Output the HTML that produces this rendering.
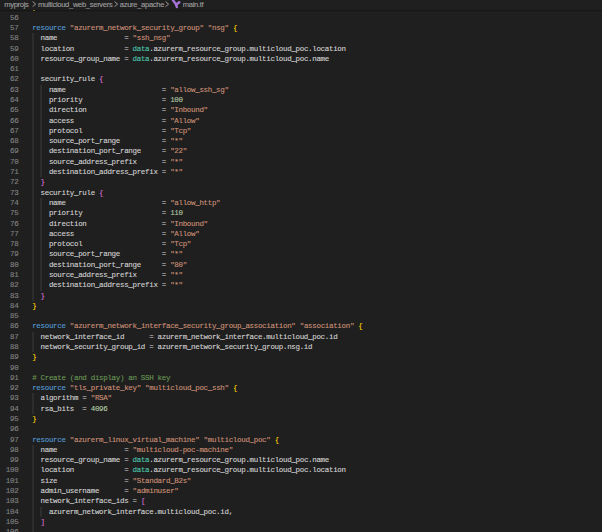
<!DOCTYPE html><html><head><meta charset="utf-8"><style>
*{margin:0;padding:0;box-sizing:border-box}
html,body{width:602px;height:532px;overflow:hidden;background:#1f1f1f}
body{position:relative;font-family:"Liberation Mono",monospace;font-size:7.5px;letter-spacing:-0.321px;-webkit-text-stroke:0.1px}
.bc{position:absolute;left:0;top:0;width:602px;height:10px;background:#1f1f1f;font-family:"Liberation Sans",sans-serif;font-size:7.6px;color:#a0a0a0;white-space:pre}
.bs{position:absolute;top:-0.3px}
.sh{position:absolute;left:0;top:10px;width:602px;height:2px;background:linear-gradient(#141414,#1f1f1f)}
.ln{position:absolute;left:0;width:18.4px;text-align:right;color:#858585;white-space:pre;line-height:10.29px;height:10.29px}
.cl{position:absolute;left:32.2px;white-space:pre;color:#d4d4d4;line-height:10.29px;height:10.29px}
.g{position:absolute;width:2px;background:#2d2d2d}
.k{color:#569cd6}.s{color:#ce9178}.n{color:#b5cea8}.c{color:#6a9955}.d{color:#4ec9b0}
.b1{color:#ffd700}.b2{color:#da70d6}.b3{color:#179fff}
</style></head><body>
<div class="bc"><span class="bs" style="left:4.2px">myprojs</span><svg style="position:absolute;left:31.6px;top:1.3px" width="5" height="7" viewBox="0 0 5 7"><path d="M0.6 0.6 L3.6 3.1 L0.6 5.6" fill="none" stroke="#a9a9a9" stroke-width="0.9"/></svg><span class="bs" style="left:38.0px">multicloud_web_servers</span><svg style="position:absolute;left:114.0px;top:1.3px" width="5" height="7" viewBox="0 0 5 7"><path d="M0.6 0.6 L3.6 3.1 L0.6 5.6" fill="none" stroke="#a9a9a9" stroke-width="0.9"/></svg><span class="bs" style="left:119.8px">azure_apache</span><svg style="position:absolute;left:165.0px;top:1.3px" width="5" height="7" viewBox="0 0 5 7"><path d="M0.6 0.6 L3.6 3.1 L0.6 5.6" fill="none" stroke="#a9a9a9" stroke-width="0.9"/></svg><svg style="position:absolute;left:171px;top:0px" width="10" height="9" viewBox="171 0 10 9"><g stroke="#a674d8" stroke-width="2.4" stroke-linecap="round" fill="none"><path d="M173.0 0.3 L175.8 4"/><path d="M176.6 4.3 L179.3 2.2"/><path d="M176 4.3 L176.8 7"/></g></svg><span class="bs" style="left:182.8px">main.tf</span></div>
<div class="sh"></div><div style="position:absolute;left:33px;top:9.8px;width:2px;height:1.3px;background:#7d6a12"></div>
<div class="g" style="left:32.00px;top:33.28px;height:267.54px"></div>
<div class="g" style="left:40.36px;top:84.73px;height:92.61px"></div>
<div class="g" style="left:40.36px;top:197.92px;height:92.61px"></div>
<div class="g" style="left:32.00px;top:331.69px;height:20.58px"></div>
<div class="g" style="left:32.00px;top:393.43px;height:20.58px"></div>
<div class="g" style="left:32.00px;top:444.88px;height:102.90px"></div>
<div class="g" style="left:40.36px;top:506.62px;height:10.29px"></div>
<div class="ln" style="top:12.70px">56</div>
<div class="ln" style="top:22.99px">57</div>
<div class="cl" style="top:22.99px"><span class="k">resource</span> <span class="s">&quot;azurerm_network_security_group&quot;</span> <span class="s">&quot;nsg&quot;</span> <span class="b1">{</span></div>
<div class="ln" style="top:33.28px">58</div>
<div class="cl" style="top:33.28px">  name                = <span class="s">&quot;ssh_nsg&quot;</span></div>
<div class="ln" style="top:43.57px">59</div>
<div class="cl" style="top:43.57px">  location            = <span class="d">data</span>.azurerm_resource_group.multicloud_poc.location</div>
<div class="ln" style="top:53.86px">60</div>
<div class="cl" style="top:53.86px">  resource_group_name = <span class="d">data</span>.azurerm_resource_group.multicloud_poc.name</div>
<div class="ln" style="top:64.15px">61</div>
<div class="ln" style="top:74.44px">62</div>
<div class="cl" style="top:74.44px">  security_rule <span class="b2">{</span></div>
<div class="ln" style="top:84.73px">63</div>
<div class="cl" style="top:84.73px">    name                       = <span class="s">&quot;allow_ssh_sg&quot;</span></div>
<div class="ln" style="top:95.02px">64</div>
<div class="cl" style="top:95.02px">    priority                   = <span class="n">100</span></div>
<div class="ln" style="top:105.31px">65</div>
<div class="cl" style="top:105.31px">    direction                  = <span class="s">&quot;Inbound&quot;</span></div>
<div class="ln" style="top:115.60px">66</div>
<div class="cl" style="top:115.60px">    access                     = <span class="s">&quot;Allow&quot;</span></div>
<div class="ln" style="top:125.89px">67</div>
<div class="cl" style="top:125.89px">    protocol                   = <span class="s">&quot;Tcp&quot;</span></div>
<div class="ln" style="top:136.18px">68</div>
<div class="cl" style="top:136.18px">    source_port_range          = <span class="s">&quot;*&quot;</span></div>
<div class="ln" style="top:146.47px">69</div>
<div class="cl" style="top:146.47px">    destination_port_range     = <span class="s">&quot;22&quot;</span></div>
<div class="ln" style="top:156.76px">70</div>
<div class="cl" style="top:156.76px">    source_address_prefix      = <span class="s">&quot;*&quot;</span></div>
<div class="ln" style="top:167.05px">71</div>
<div class="cl" style="top:167.05px">    destination_address_prefix = <span class="s">&quot;*&quot;</span></div>
<div class="ln" style="top:177.34px">72</div>
<div class="cl" style="top:177.34px">  <span class="b2">}</span></div>
<div class="ln" style="top:187.63px">73</div>
<div class="cl" style="top:187.63px">  security_rule <span class="b2">{</span></div>
<div class="ln" style="top:197.92px">74</div>
<div class="cl" style="top:197.92px">    name                       = <span class="s">&quot;allow_ht<span></span>tp&quot;</span></div>
<div class="ln" style="top:208.21px">75</div>
<div class="cl" style="top:208.21px">    priority                   = <span class="n">110</span></div>
<div class="ln" style="top:218.50px">76</div>
<div class="cl" style="top:218.50px">    direction                  = <span class="s">&quot;Inbound&quot;</span></div>
<div class="ln" style="top:228.79px">77</div>
<div class="cl" style="top:228.79px">    access                     = <span class="s">&quot;Allow&quot;</span></div>
<div class="ln" style="top:239.08px">78</div>
<div class="cl" style="top:239.08px">    protocol                   = <span class="s">&quot;Tcp&quot;</span></div>
<div class="ln" style="top:249.37px">79</div>
<div class="cl" style="top:249.37px">    source_port_range          = <span class="s">&quot;*&quot;</span></div>
<div class="ln" style="top:259.66px">80</div>
<div class="cl" style="top:259.66px">    destination_port_range     = <span class="s">&quot;80&quot;</span></div>
<div class="ln" style="top:269.95px">81</div>
<div class="cl" style="top:269.95px">    source_address_prefix      = <span class="s">&quot;*&quot;</span></div>
<div class="ln" style="top:280.24px">82</div>
<div class="cl" style="top:280.24px">    destination_address_prefix = <span class="s">&quot;*&quot;</span></div>
<div class="ln" style="top:290.53px">83</div>
<div class="cl" style="top:290.53px">  <span class="b2">}</span></div>
<div class="ln" style="top:300.82px">84</div>
<div class="cl" style="top:300.82px"><span class="b1">}</span></div>
<div class="ln" style="top:311.11px">85</div>
<div class="ln" style="top:321.40px">86</div>
<div class="cl" style="top:321.40px"><span class="k">resource</span> <span class="s">&quot;azurerm_network_interface_security_group_association&quot;</span> <span class="s">&quot;association&quot;</span> <span class="b1">{</span></div>
<div class="ln" style="top:331.69px">87</div>
<div class="cl" style="top:331.69px">  network_interface_id      = azurerm_network_interface.multicloud_poc.id</div>
<div class="ln" style="top:341.98px">88</div>
<div class="cl" style="top:341.98px">  network_security_group_id = azurerm_network_security_group.nsg.id</div>
<div class="ln" style="top:352.27px">89</div>
<div class="cl" style="top:352.27px"><span class="b1">}</span></div>
<div class="ln" style="top:362.56px">90</div>
<div class="ln" style="top:372.85px">91</div>
<div class="cl" style="top:372.85px"><span class="c"># Create (and display) an SSH key</span></div>
<div class="ln" style="top:383.14px">92</div>
<div class="cl" style="top:383.14px"><span class="k">resource</span> <span class="s">&quot;tls_private_key&quot;</span> <span class="s">&quot;multicloud_poc_ssh&quot;</span> <span class="b1">{</span></div>
<div class="ln" style="top:393.43px">93</div>
<div class="cl" style="top:393.43px">  algorithm = <span class="s">&quot;RSA&quot;</span></div>
<div class="ln" style="top:403.72px">94</div>
<div class="cl" style="top:403.72px">  rsa_bits  = <span class="n">4096</span></div>
<div class="ln" style="top:414.01px">95</div>
<div class="cl" style="top:414.01px"><span class="b1">}</span></div>
<div class="ln" style="top:424.30px">96</div>
<div class="ln" style="top:434.59px">97</div>
<div class="cl" style="top:434.59px"><span class="k">resource</span> <span class="s">&quot;azurerm_linux_virtual_machine&quot;</span> <span class="s">&quot;multicloud_poc&quot;</span> <span class="b1">{</span></div>
<div class="ln" style="top:444.88px">98</div>
<div class="cl" style="top:444.88px">  name                = <span class="s">&quot;multicloud-poc-machine&quot;</span></div>
<div class="ln" style="top:455.17px">99</div>
<div class="cl" style="top:455.17px">  resource_group_name = <span class="d">data</span>.azurerm_resource_group.multicloud_poc.name</div>
<div class="ln" style="top:465.46px">100</div>
<div class="cl" style="top:465.46px">  location            = <span class="d">data</span>.azurerm_resource_group.multicloud_poc.location</div>
<div class="ln" style="top:475.75px">101</div>
<div class="cl" style="top:475.75px">  size                = <span class="s">&quot;Standard_B2s&quot;</span></div>
<div class="ln" style="top:486.04px">102</div>
<div class="cl" style="top:486.04px">  admin_username      = <span class="s">&quot;adminuser&quot;</span></div>
<div class="ln" style="top:496.33px">103</div>
<div class="cl" style="top:496.33px">  network_interface_ids = <span class="b2">[</span></div>
<div class="ln" style="top:506.62px">104</div>
<div class="cl" style="top:506.62px">    azurerm_network_interface.multicloud_poc.id,</div>
<div class="ln" style="top:516.91px">105</div>
<div class="cl" style="top:516.91px">  <span class="b2">]</span></div>
<div class="ln" style="top:527.20px">106</div>
</body></html>
